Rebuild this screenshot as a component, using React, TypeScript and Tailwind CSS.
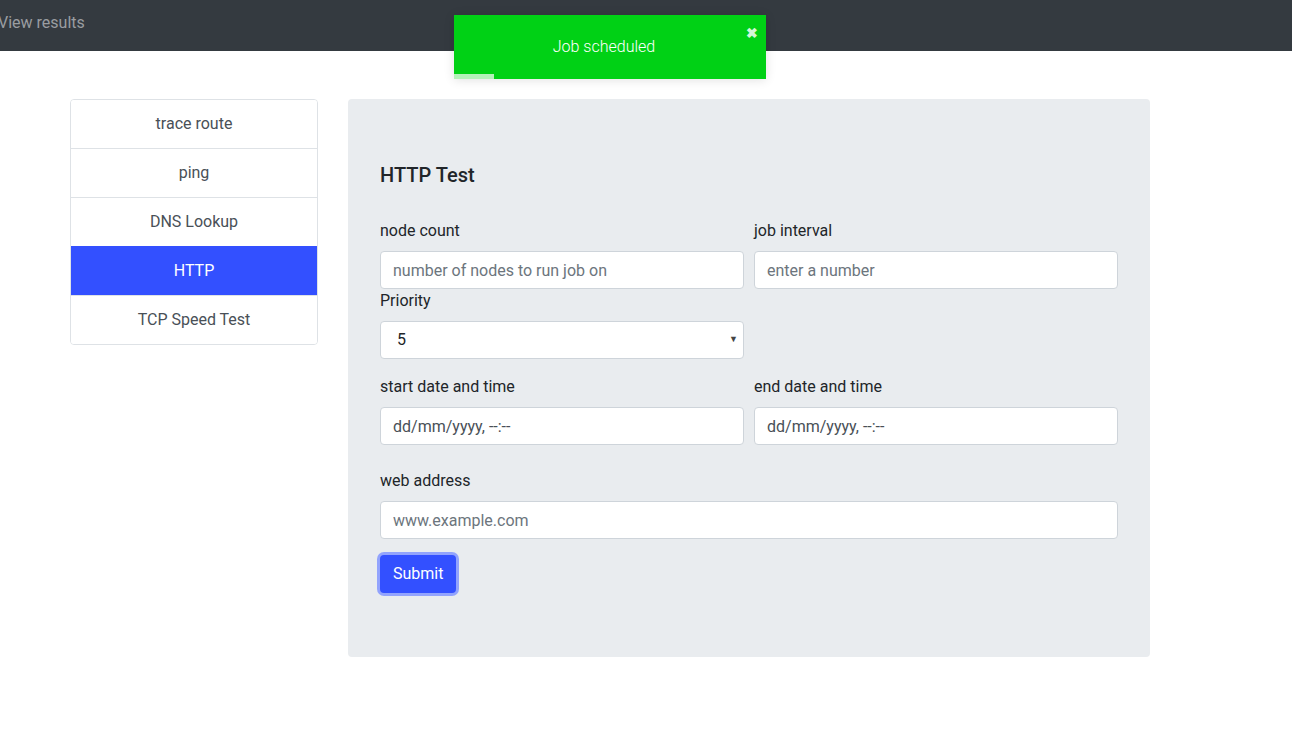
import React from "react";

const font = { fontFamily: "Roboto, 'Liberation Sans', sans-serif" };

function Label({ children }: { children: React.ReactNode }) {
  return <div className="text-[16px] leading-[24px] text-[#212529] mb-[8px]">{children}</div>;
}

function Input({ placeholder, value }: { placeholder?: string; value?: string }) {
  return (
    <input
      readOnly
      placeholder={placeholder}
      value={value ?? ""}
      className="block w-full h-[38px] rounded-[4px] border border-[#ced4da] bg-white px-[12px] text-[16px] text-[#495057] placeholder:text-[#6c757d] outline-none"
      style={font}
    />
  );
}

export default function App() {
  const items = ["trace route", "ping", "DNS Lookup", "HTTP", "TCP Speed Test"];
  return (
    <div className="relative min-h-[739px] bg-white" style={font}>
      <nav className="h-[51px] bg-[#343a40] flex items-center">
        <span className="-ml-[2px] -mt-[5px] text-[16px] text-[#9a9da1]">View results</span>
      </nav>

      <div className="absolute left-[454px] top-[15px] w-[312px] h-[64px] bg-[#00d115] shadow-[0_1px_10px_rgba(0,0,0,0.12)] flex items-center justify-center pr-[12px]">
        <span className="text-white text-[16px] font-light -mt-[1px]">Job scheduled</span>
        <span className="absolute right-[8px] top-[18px] -translate-y-1/2 text-[14px] font-bold leading-none text-[#d4f6d7]">✖</span>
        <div className="absolute left-0 bottom-0 w-[40px] h-[5px] bg-[#b4f1b9]" />
      </div>

      <div className="flex items-start pl-[70px] pt-[48px] gap-[30px]">
        <div className="w-[248px] rounded-[4px] border border-[#dee2e6] overflow-hidden">
          {items.map((it, i) => (
            <div
              key={it}
              className={
                "flex items-center justify-center text-[16px] " +
                (i > 0 ? "h-[49px] border-t " : "h-[48px] ") +
                (it === "HTTP"
                  ? "bg-[#3350ff] text-white border-[#3350ff]"
                  : "bg-white text-[#495057] border-[#dee2e6]")
              }
            >
              {it}
            </div>
          ))}
        </div>

        <div className="w-[802px] h-[558px] rounded-[4px] bg-[#e9ecef] px-[32px] pt-[64px]">
          <h5 className="text-[20px] leading-[24px] font-medium text-[#212529] mb-[32px]">HTTP Test</h5>

          <div className="grid grid-cols-2 gap-x-[10px]">
            <div>
              <Label>node count</Label>
              <Input placeholder="number of nodes to run job on" />
            </div>
            <div>
              <Label>job interval</Label>
              <Input placeholder="enter a number" />
            </div>
          </div>

          <div className="w-[364px] mb-[16px]">
            <Label>Priority</Label>
            <div className="relative h-[38px] rounded-[4px] border border-[#ced4da] bg-white flex items-center pl-[16px] text-[16px] text-[#212529]">
              5
              <span className="absolute right-[5px] top-1/2 -translate-y-1/2 text-[9px] text-[#444]">▼</span>
            </div>
          </div>

          <div className="grid grid-cols-2 gap-x-[10px] mb-[24px]">
            <div>
              <Label>start date and time</Label>
              <Input value="dd/mm/yyyy, --:--" />
            </div>
            <div>
              <Label>end date and time</Label>
              <Input value="dd/mm/yyyy, --:--" />
            </div>
          </div>

          <div className="mb-[16px]">
            <Label>web address</Label>
            <Input placeholder="www.example.com" />
          </div>

          <button className="h-[38px] px-[13px] rounded-[4px] bg-[#3350ff] text-white text-[16px] shadow-[0_0_0_3px_rgba(130,150,255,0.85)]">
            Submit
          </button>
        </div>
      </div>
    </div>
  );
}
